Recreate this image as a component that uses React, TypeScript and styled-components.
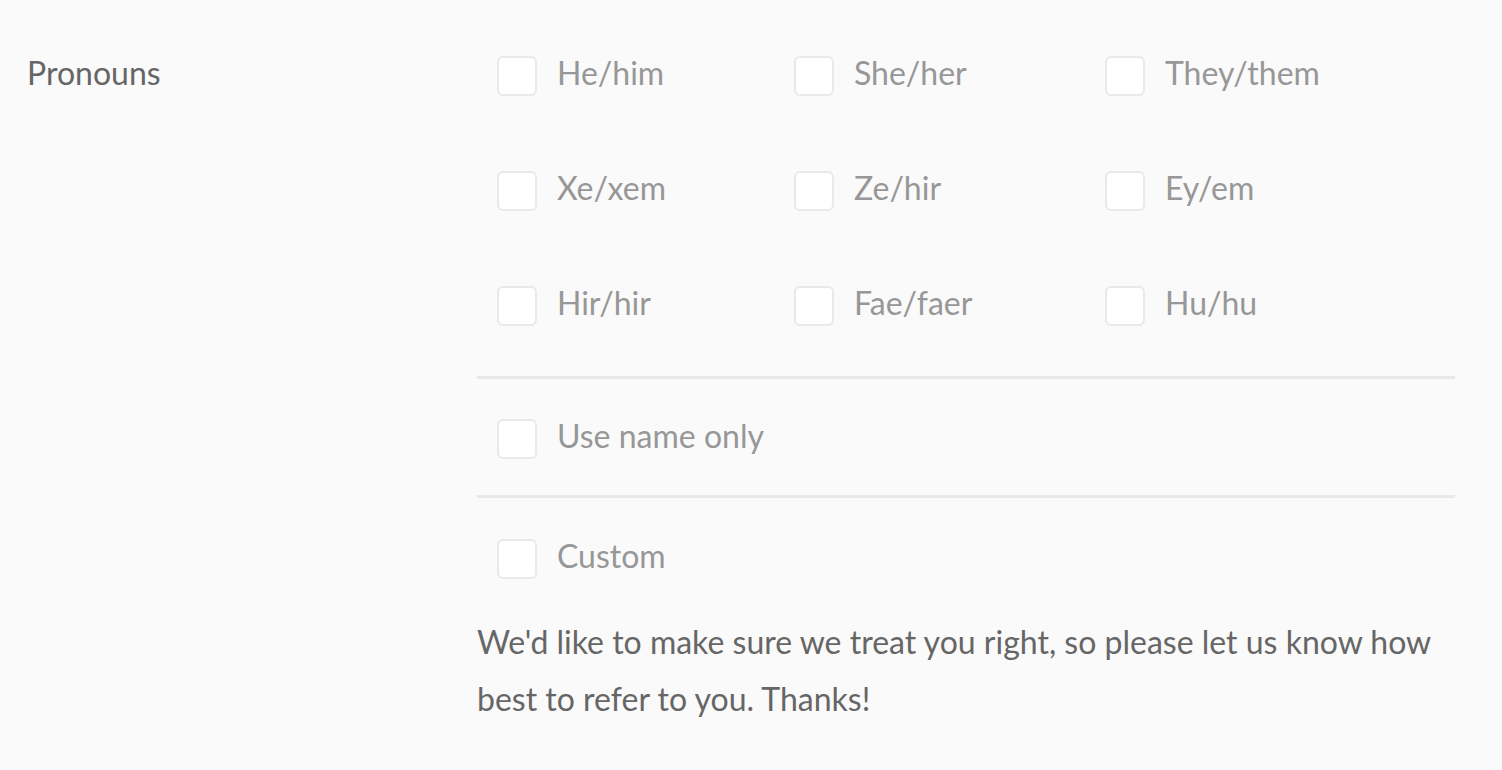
import styled, { createGlobalStyle } from 'styled-components';

const GlobalStyle = createGlobalStyle`
  html, body {
    margin: 0;
    padding: 0;
    background: #fafafa;
    font-family: Lato, "Open Sans", sans-serif;
  }
`;

const Field = styled.section`
  display: grid;
  grid-template-columns: 450px 978px;
  padding: 48px 0 0 27px;
`;

const FieldLabel = styled.div`
  font-size: 32px;
  line-height: 50px;
  color: #666;
`;

const Options = styled.div`
  display: flex;
  flex-direction: column;
`;

const PronounGrid = styled.div`
  display: grid;
  grid-template-columns: 297px 311px auto;
  row-gap: 75px;
  padding: 8px 0 0 20px;
`;

const Divider = styled.hr<{ $top: number; $bottom: number }>`
  border: none;
  height: 3px;
  background: #e8e8e8;
  margin: ${(p) => p.$top}px 0 ${(p) => p.$bottom}px 0;
`;

const Option = styled.label<{ $indent?: boolean }>`
  display: flex;
  align-items: center;
  gap: 20px;
  height: 40px;
  padding-left: ${(p) => (p.$indent ? 20 : 0)}px;
  cursor: pointer;
`;

const Box = styled.span`
  box-sizing: border-box;
  width: 40px;
  height: 40px;
  flex: none;
  background: #fff;
  border: 2px solid #e9e9e9;
  border-radius: 6px;
`;

const OptionText = styled.span`
  font-size: 32px;
  color: #979797;
  line-height: 1;
  margin-top: -7px;
`;

const Hint = styled.p`
  margin: 34px 0 0 0;
  font-size: 32px;
  line-height: 57px;
  color: #666;
`;

const pronouns = [
  'He/him', 'She/her', 'They/them',
  'Xe/xem', 'Ze/hir', 'Ey/em',
  'Hir/hir', 'Fae/faer', 'Hu/hu',
];

export default function App() {
  return (
    <>
      <GlobalStyle />
      <Field>
        <FieldLabel>Pronouns</FieldLabel>
        <Options>
          <PronounGrid>
            {pronouns.map((p) => (
              <Option key={p}>
                <Box />
                <OptionText>{p}</OptionText>
              </Option>
            ))}
          </PronounGrid>
          <Divider $top={50} $bottom={40} />
          <Option $indent>
            <Box />
            <OptionText>Use name only</OptionText>
          </Option>
          <Divider $top={36} $bottom={41} />
          <Option $indent>
            <Box />
            <OptionText>Custom</OptionText>
          </Option>
          <Hint>
            We'd like to make sure we treat you right, so please let us know how best to refer to you. Thanks!
          </Hint>
        </Options>
      </Field>
    </>
  );
}
